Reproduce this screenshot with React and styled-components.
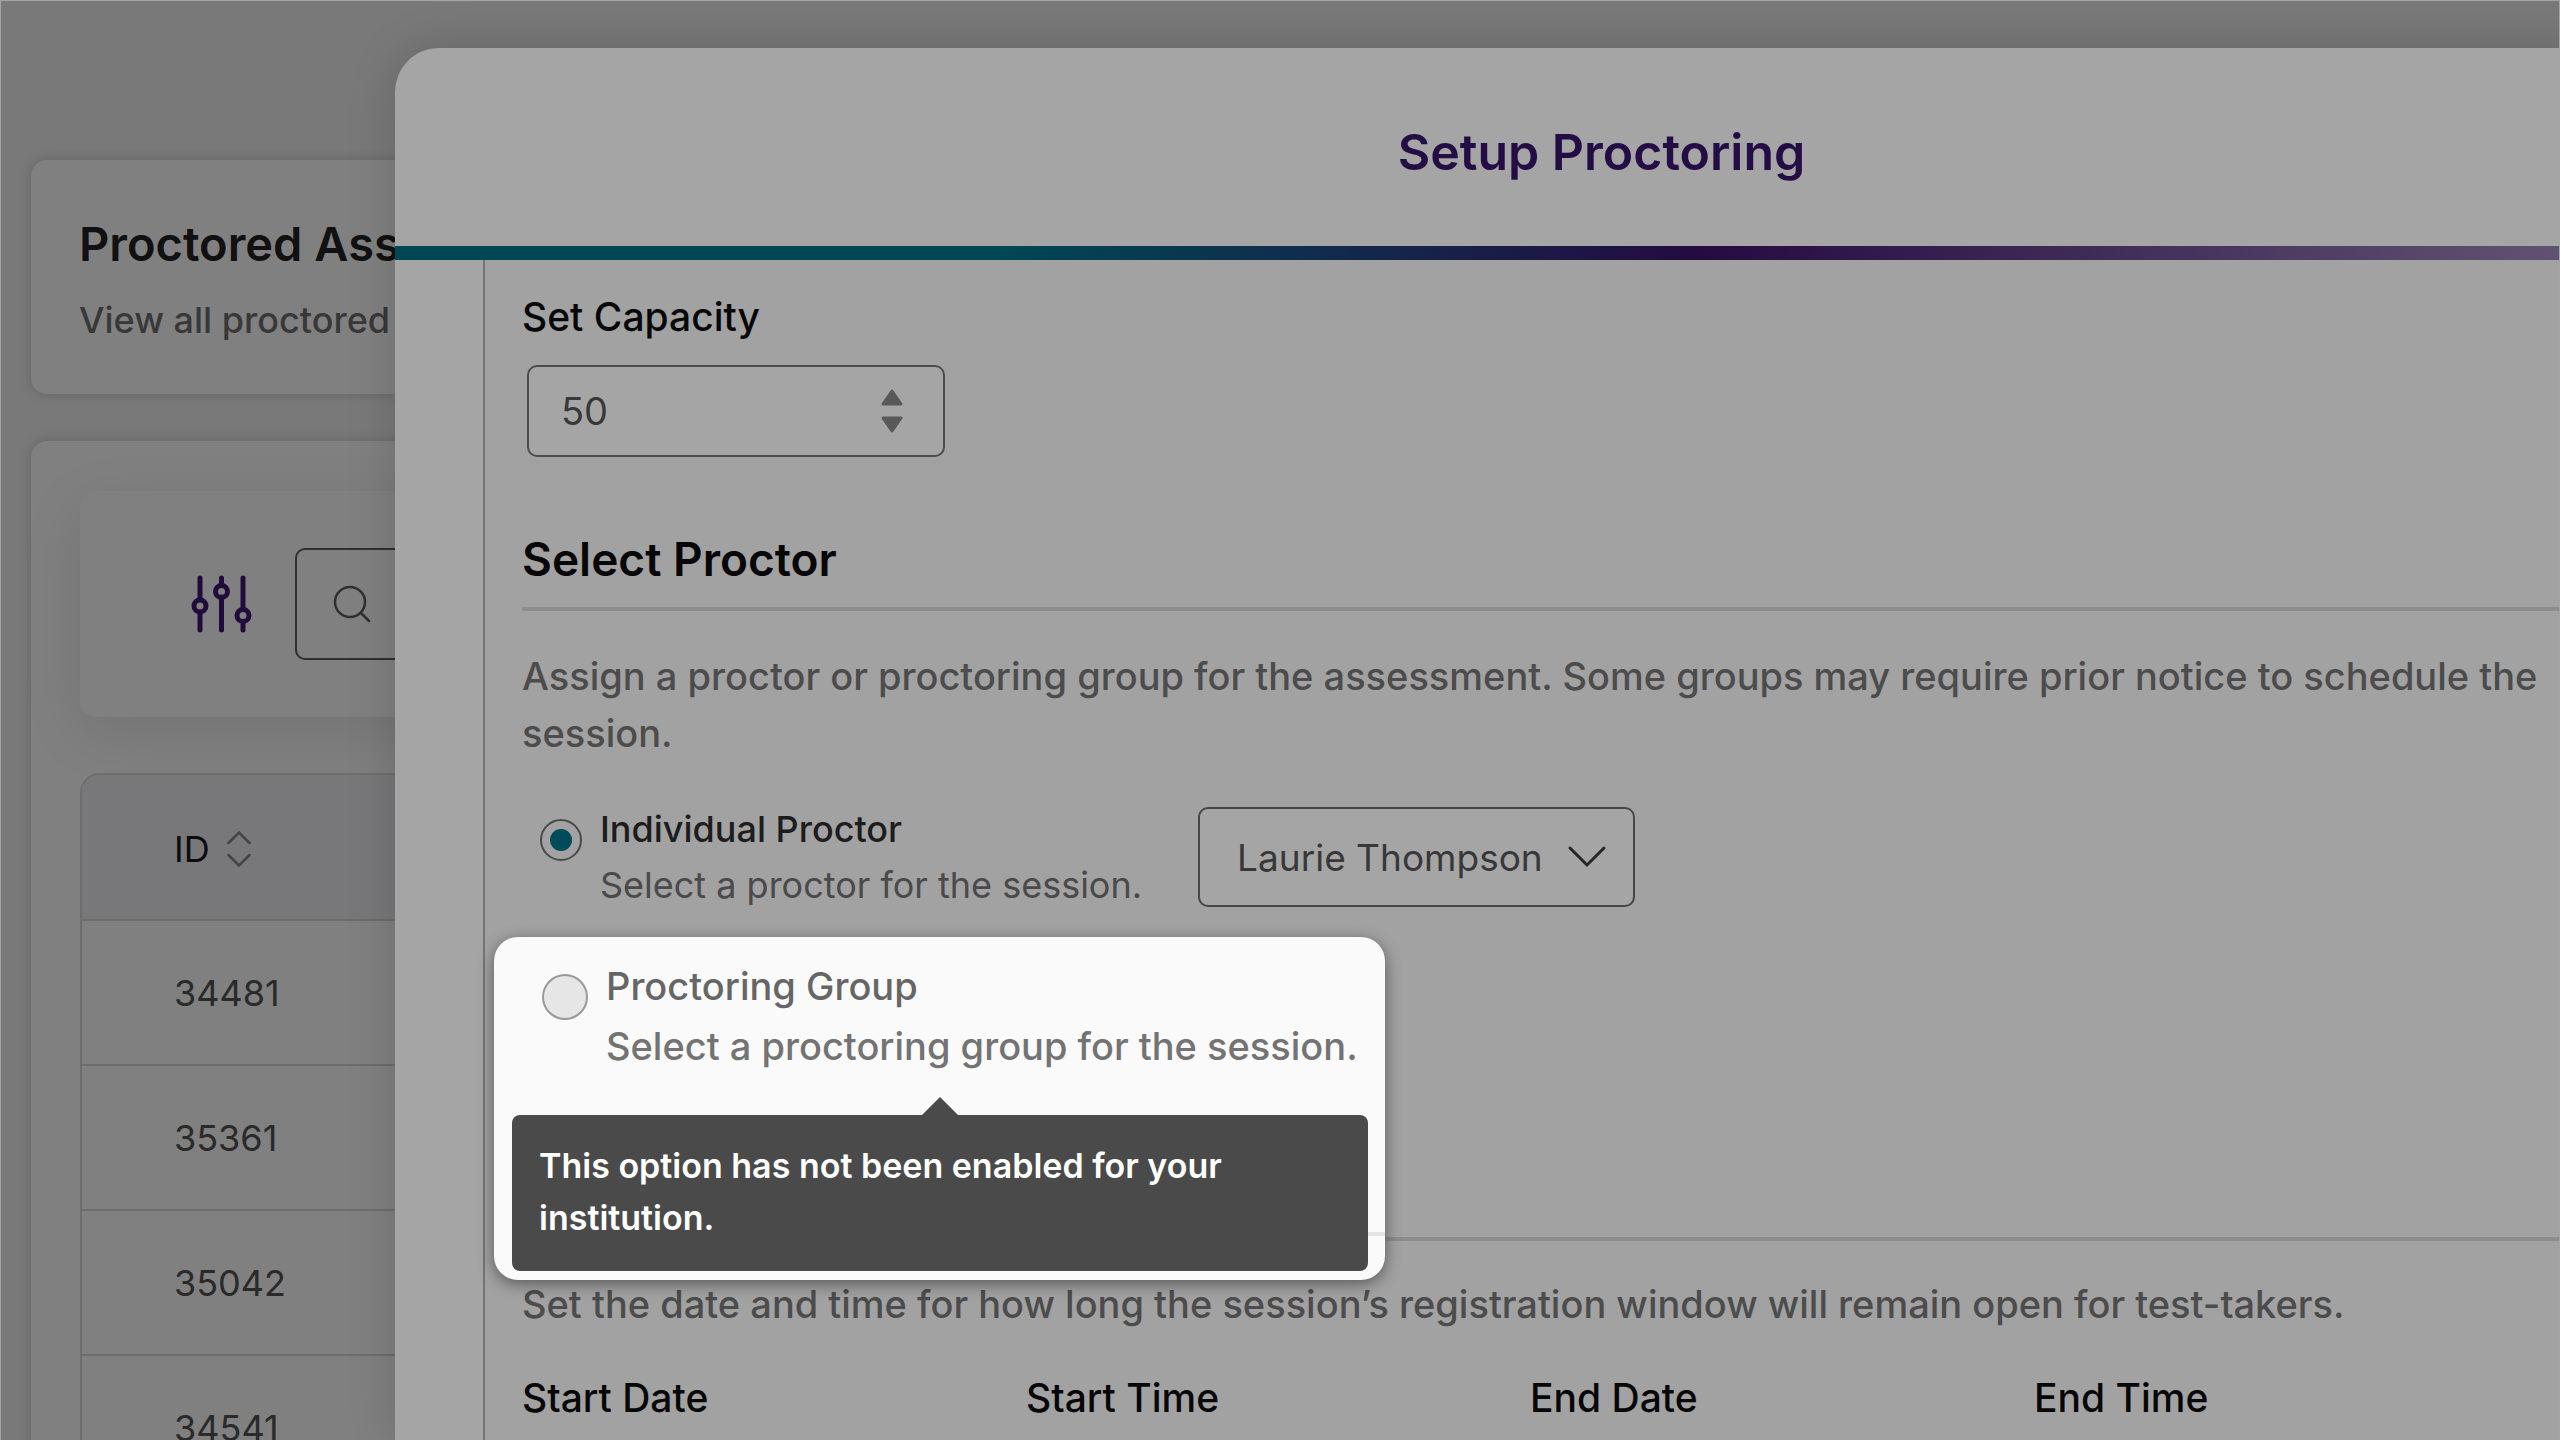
import React, { useState } from "react";
import styled, { createGlobalStyle } from "styled-components";

const sessions = ["34481", "35361", "35042", "34541"];
const proctors = ["Laurie Thompson"];
const windowFields = ["Start Date", "Start Time", "End Date", "End Time"];

const App = () => {
  const [capacity, setCapacity] = useState(50);
  const [proctor, setProctor] = useState(proctors[0]);
  const onCapacityHandler = (e) => {
    setCapacity(Number(e.target.value));
  };
  const onProctorHandler = (e) => {
    setProctor(e.target.value);
  };

  return (
    <>
      <GlobalStyle />
      <Page>
        <Background>
          <Intro>
            <h1>Proctored Assessments</h1>
            <p>View all proctored</p>
          </Intro>
          <ListCard>
            <FilterBar>
              <FilterButton type="button" aria-label="Filters">
                <svg width="62" height="60" viewBox="0 0 62 60" fill="none">
                  <g stroke="#200c3c" strokeWidth="5" strokeLinecap="round">
                    <path d="M9 4v21M9 38v18M30.500 4v6M30.500 23v33M52 4v31M52 48v8" />
                    <circle cx="9" cy="32" r="6" />
                    <circle cx="30.500" cy="17.500" r="6" />
                    <circle cx="52" cy="41.500" r="6" />
                  </g>
                </svg>
              </FilterButton>
              <SearchBox>
                <svg width="38" height="38" viewBox="0 0 38 38" fill="none">
                  <g stroke="#303030" strokeWidth="2.500" strokeLinecap="round">
                    <circle cx="17" cy="17" r="15" />
                    <path d="M28 28l8 8" />
                  </g>
                </svg>
                <input type="text" aria-label="Search" />
              </SearchBox>
            </FilterBar>
            <TableFrame>
              <Table>
                <thead>
                  <tr>
                    <th>
                      <HeadCell>
                        ID
                        <svg
                          width="26"
                          height="40"
                          viewBox="0 0 26 40"
                          fill="none"
                        >
                          <path
                            d="M2.500 14L13 3.500 23.500 14M2.500 26L13 36.500 23.500 26"
                            stroke="#454547"
                            strokeWidth="2.500"
                            strokeLinecap="round"
                          />
                        </svg>
                      </HeadCell>
                    </th>
                  </tr>
                </thead>
                <tbody>
                  {sessions.map((id) => (
                    <tr key={id}>
                      <td>{id}</td>
                    </tr>
                  ))}
                </tbody>
              </Table>
            </TableFrame>
          </ListCard>
        </Background>

        <Overlay>
          <Modal role="dialog" aria-labelledby="modal-title">
            <ModalHeader>
              <h2 id="modal-title">Setup Proctoring</h2>
            </ModalHeader>
            <ModalBar />
            <ModalBody>
              <Content>
                <FieldLabel htmlFor="capacity">Set Capacity</FieldLabel>
                <NumberBox>
                  <input
                    id="capacity"
                    type="number"
                    value={capacity}
                    onChange={onCapacityHandler}
                  />
                  <Stepper>
                    <button
                      type="button"
                      aria-label="Increase"
                      onClick={() => setCapacity(capacity + 1)}
                    >
                      <svg width="22" height="17" viewBox="0 0 22 17">
                        <path
                          d="M11 2L20 15H2z"
                          fill="#595959"
                          stroke="#595959"
                          strokeWidth="3"
                          strokeLinejoin="round"
                        />
                      </svg>
                    </button>
                    <button
                      type="button"
                      aria-label="Decrease"
                      onClick={() => setCapacity(capacity - 1)}
                    >
                      <svg width="22" height="17" viewBox="0 0 22 17">
                        <path
                          d="M11 15L20 2H2z"
                          fill="#595959"
                          stroke="#595959"
                          strokeWidth="3"
                          strokeLinejoin="round"
                        />
                      </svg>
                    </button>
                  </Stepper>
                </NumberBox>

                <SectionTitle>Select Proctor</SectionTitle>
                <Description>
                  Assign a proctor or proctoring group for the assessment. Some
                  groups may require prior notice to schedule the session.
                </Description>

                <OptionRow>
                  <Radio
                    type="radio"
                    id="individual"
                    name="proctor-type"
                    defaultChecked
                  />
                  <OptionText htmlFor="individual">
                    <strong>Individual Proctor</strong>
                    <span>Select a proctor for the session.</span>
                  </OptionText>
                  <SelectBox>
                    <select
                      aria-label="Proctor"
                      value={proctor}
                      onChange={onProctorHandler}
                    >
                      {proctors.map((name) => (
                        <option key={name}>{name}</option>
                      ))}
                    </select>
                    <svg width="40" height="24" viewBox="0 0 40 24" fill="none">
                      <path
                        d="M3 3l17 17L37 3"
                        stroke="#262626"
                        strokeWidth="3"
                        strokeLinecap="round"
                      />
                    </svg>
                  </SelectBox>
                </OptionRow>

                <GroupSlot>
                  <Spotlight>
                    <GroupOption>
                      <Radio
                        type="radio"
                        id="group"
                        name="proctor-type"
                        aria-describedby="group-tip"
                        disabled
                      />
                      <OptionText htmlFor="group" $disabled>
                        <strong>Proctoring Group</strong>
                        <span>Select a proctoring group for the session.</span>
                      </OptionText>
                    </GroupOption>
                    <Tooltip id="group-tip" role="tooltip">
                      This option has not been enabled for your institution.
                    </Tooltip>
                  </Spotlight>
                </GroupSlot>

                <Divider />
                <Description>
                  Set the date and time for how long the session’s registration
                  window will remain open for test-takers.
                </Description>
                <WindowFields>
                  {windowFields.map((field) => (
                    <FieldLabel as="span" key={field}>
                      {field}
                    </FieldLabel>
                  ))}
                </WindowFields>
              </Content>
            </ModalBody>
          </Modal>
        </Overlay>
      </Page>
    </>
  );
};

export default App;

const GlobalStyle = createGlobalStyle`
  * {
    box-sizing: border-box;
  }
  body {
    margin: 0;
    overflow: hidden;
    font-family: Inter, "Liberation Sans", sans-serif;
    font-size: 36px;
  }
  h1, h2, h3, p {
    margin: 0;
  }
  input, select, button {
    font: inherit;
  }
  svg {
    display: block;
    flex: none;
  }
`;

const Page = styled.div`
  position: relative;
  height: 100vh;
  overflow: hidden;
  background: #797979;
  border: 1px solid #a3a5a5;
  border-bottom: none;
`;

const Background = styled.div`
  display: flex;
  flex-direction: column;
  gap: 47px;
  padding: 159px 30px 0;
`;

const Card = styled.section`
  border-radius: 16px;
  background: #808080;
  box-shadow: 0 0 12px rgba(0, 0, 0, 0.18);
`;

const Intro = styled(Card)`
  padding: 54px 48px 46px;
  white-space: nowrap;
  h1 {
    font-size: 47px;
    line-height: 60px;
    font-weight: 600;
    color: #111111;
  }
  p {
    margin-top: 18px;
    line-height: 56px;
    font-weight: 450;
    color: #383838;
  }
`;

const ListCard = styled(Card)`
  padding: 50px 49px 0;
`;

const FilterBar = styled.div`
  display: flex;
  align-items: center;
  gap: 42px;
  padding: 57px 111px;
  border-radius: 16px;
  background: #808080;
  box-shadow: 0 16px 60px rgba(0, 0, 0, 0.1);
`;

const FilterButton = styled.button`
  padding: 0;
  border: none;
  background: none;
`;

const SearchBox = styled.div`
  display: flex;
  flex: 1;
  align-items: center;
  height: 112px;
  padding: 0 36px;
  border: 2px solid #303030;
  border-radius: 10px;
  input {
    flex: 1;
    border: none;
    background: none;
  }
`;

const TableFrame = styled.div`
  margin-top: 56px;
  overflow: hidden;
  border: 2px solid #6d6d6d;
  border-radius: 20px 20px 0 0;
`;

const Table = styled.table`
  width: 100%;
  border-collapse: collapse;
  th,
  td {
    height: 145px;
    padding: 0 92px;
    border-bottom: 2px solid #6d6d6d;
    text-align: left;
    font-weight: 400;
    color: #2a2a2a;
  }
  th {
    padding-top: 4px;
    background: #78787b;
    color: #0c0c0c;
  }
`;

const HeadCell = styled.span`
  display: flex;
  align-items: center;
  gap: 16px;
`;

const Overlay = styled.div`
  position: absolute;
  inset: 0;
  display: flex;
  padding: 47px 0 0 394px;
`;

const Modal = styled.div`
  display: flex;
  flex: 1;
  flex-direction: column;
  margin-right: -249px;
  overflow: hidden;
  border-radius: 44px 0 0 0;
  background: #a5a5a5;
  box-shadow: 0 0 48px rgba(0, 0, 0, 0.16);
`;

const ModalHeader = styled.header`
  padding: 72px 0 62px;
  text-align: center;
  h2 {
    font-size: 50px;
    line-height: 64px;
    font-weight: 600;
    color: #230d44;
  }
`;

const ModalBar = styled.div`
  flex: none;
  height: 14px;
  background: linear-gradient(
    90deg,
    #004755 25%,
    #240b42 54%,
    #5e4f70 88%,
    #6d6080
  );
`;

const ModalBody = styled.div`
  flex: 1;
  margin-left: 88px;
  padding: 33px 0 0 37px;
  border-left: 2px solid #757575;
  background: #a2a2a2;
`;

const Content = styled.div`
  padding-right: 200px;
`;

const FieldLabel = styled.label`
  display: block;
  font-size: 39px;
  line-height: 48px;
  font-weight: 500;
  color: #070707;
`;

const NumberBox = styled.div`
  display: flex;
  align-items: center;
  width: 418px;
  height: 92px;
  margin: 24px 0 0 5px;
  padding: 0 40px 0 32px;
  border: 2px solid #4c4c4c;
  border-radius: 10px;
  background: #a5a5a5;
  input {
    flex: 1;
    min-width: 0;
    padding: 0;
    border: none;
    outline: none;
    background: none;
    appearance: textfield;
    font-size: 38px;
    color: #383838;
  }
  input::-webkit-inner-spin-button {
    appearance: none;
    margin: 0;
  }
`;

const Stepper = styled.div`
  display: flex;
  flex-direction: column;
  gap: 10px;
  button {
    padding: 0;
    border: none;
    background: none;
  }
`;

const SectionTitle = styled.h3`
  margin: 74px -200px 37px 0;
  padding-bottom: 20px;
  border-bottom: 4px solid #8d8d8d;
  font-size: 46px;
  line-height: 56px;
  font-weight: 600;
  color: #070707;
`;

const Description = styled.p`
  font-size: 38px;
  line-height: 57px;
  font-weight: 450;
  color: #4c4c4c;
`;

const OptionRow = styled.div`
  display: flex;
  align-items: flex-start;
  gap: 18px;
  margin-top: 39px;
  padding-left: 18px;
`;

const Radio = styled.input`
  flex: none;
  display: grid;
  place-items: center;
  width: 42px;
  height: 42px;
  margin: 18px 0 0;
  appearance: none;
  border: 2px solid #4a4a4a;
  border-radius: 50%;
  &:checked::before {
    content: "";
    width: 22px;
    height: 22px;
    border-radius: 50%;
    background: #004b5a;
  }
  &:disabled {
    width: 46px;
    height: 46px;
    border-color: #999999;
    background: #e6e6e6;
  }
`;

const OptionText = styled.label`
  display: flex;
  flex-direction: column;
  font-size: ${(props) => (props.$disabled ? 38 : 36)}px;
  line-height: ${(props) => (props.$disabled ? 60 : 56)}px;
  font-weight: ${(props) => (props.$disabled ? 450 : 400)};
  color: ${(props) => (props.$disabled ? "#737373" : "#4a4a4a")};
  strong {
    font-weight: 500;
    color: ${(props) => (props.$disabled ? "#666666" : "#1d1d1d")};
  }
`;

const SelectBox = styled.div`
  position: relative;
  margin: 6px 0 0 38px;
  select {
    height: 100px;
    padding: 0 90px 0 37px;
    appearance: none;
    border: 2px solid #464646;
    border-radius: 10px;
    background: #a5a5a5;
    font-size: 37px;
    color: #383838;
  }
  svg {
    position: absolute;
    top: 38px;
    right: 28px;
    pointer-events: none;
  }
`;

const GroupSlot = styled.div`
  position: relative;
  height: 300px;
  margin-top: 24px;
`;

const Spotlight = styled.div`
  position: absolute;
  top: 0;
  left: -28px;
  z-index: 1;
  width: 891px;
  padding: 19px 17px 9px 18px;
  border-radius: 24px;
  background: #fafafa;
  box-shadow: 0 4px 16px rgba(0, 0, 0, 0.45);
  &::after {
    content: "";
    position: absolute;
    right: 0;
    bottom: 44px;
    width: 17px;
    height: 4px;
    background: #e4e4e4;
  }
`;

const GroupOption = styled.div`
  display: flex;
  align-items: flex-start;
  gap: 18px;
  padding-left: 30px;
`;

const Tooltip = styled.div`
  position: relative;
  margin-top: 39px;
  padding: 25px 27px 27px;
  border-radius: 8px;
  background: #4a4a4a;
  font-size: 34px;
  line-height: 52px;
  font-weight: 600;
  color: #ffffff;
  &::before {
    content: "";
    position: absolute;
    bottom: 100%;
    left: 50%;
    margin-left: -18px;
    border: 18px solid transparent;
    border-top-width: 0;
    border-bottom-color: #4a4a4a;
  }
`;

const Divider = styled.div`
  height: 4px;
  margin: 0 -200px 35px 0;
  background: #8d8d8d;
`;

const WindowFields = styled.div`
  display: grid;
  grid-template-columns: repeat(4, 1fr);
  margin-top: 41px;
  margin-right: 70px;
`;
